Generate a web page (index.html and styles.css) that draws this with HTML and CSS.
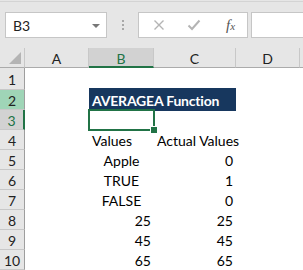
FILE: index.html
```html
<!DOCTYPE html>
<html lang="en">

<head>
  <meta charset="UTF-8" />
  <meta name="viewport" content="width=device-width, initial-scale=1" />
  <title>AVERAGEA Function</title>
  <link rel="stylesheet" href="styles.css">
</head>

<body>
  <div class="toolbar">
    <div class="name-box">
      <span>B3</span>
      <span class="caret"></span>
    </div>
    <div class="grip"><i></i><i></i><i></i></div>
    <div class="fx-buttons">
      <svg class="fx-icon" width="12" height="12" viewBox="0 0 12 12">
        <path d="M1.5 1.5 L10.5 10.5 M10.5 1.5 L1.5 10.5" stroke="#b4b4b4" stroke-width="1.4" fill="none" />
      </svg>
      <svg class="fx-icon" width="14" height="12" viewBox="0 0 14 12">
        <path d="M1.5 6.5 L5 10 L12.5 1.5" stroke="#b4b4b4" stroke-width="2" fill="none" />
      </svg>
      <span class="fx">f<sub>x</sub></span>
    </div>
    <div class="formula-input"></div>
  </div>

  <div class="sheet">
    <div class="corner"><span class="corner-tri"></span></div>
    <div class="col-head">A</div>
    <div class="col-head active">B</div>
    <div class="col-head">C</div>
    <div class="col-head">D</div>
    <div class="col-head last"></div>

    <div class="row-head">1</div>
    <div class="cell"></div><div class="cell"></div><div class="cell"></div><div class="cell"></div><div class="cell"></div>

    <div class="row-head marked">2</div>
    <div class="cell"></div>
    <div class="cell title">AVERAGEA Function</div>
    <div class="cell"></div><div class="cell"></div>

    <div class="row-head active">3</div>
    <div class="cell"></div>
    <div class="cell selected"></div>
    <div class="cell"></div><div class="cell"></div><div class="cell"></div>

    <div class="row-head">4</div>
    <div class="cell"></div>
    <div class="cell">Values</div>
    <div class="cell">Actual Values</div>
    <div class="cell"></div><div class="cell"></div>

    <div class="row-head">5</div>
    <div class="cell"></div>
    <div class="cell center">Apple</div>
    <div class="cell num">0</div>
    <div class="cell"></div><div class="cell"></div>

    <div class="row-head">6</div>
    <div class="cell"></div>
    <div class="cell center">TRUE</div>
    <div class="cell num">1</div>
    <div class="cell"></div><div class="cell"></div>

    <div class="row-head">7</div>
    <div class="cell"></div>
    <div class="cell center">FALSE</div>
    <div class="cell num">0</div>
    <div class="cell"></div><div class="cell"></div>

    <div class="row-head">8</div>
    <div class="cell"></div>
    <div class="cell num">25</div>
    <div class="cell num">25</div>
    <div class="cell"></div><div class="cell"></div>

    <div class="row-head">9</div>
    <div class="cell"></div>
    <div class="cell num">45</div>
    <div class="cell num">45</div>
    <div class="cell"></div><div class="cell"></div>

    <div class="row-head">10</div>
    <div class="cell"></div>
    <div class="cell num">65</div>
    <div class="cell num">65</div>
    <div class="cell"></div><div class="cell"></div>
  </div>
</body>

</html>
```

FILE: styles.css
```css
* {
  margin: 0;
  padding: 0;
  box-sizing: border-box;
}

body {
  background-color: #e6e6e6;
  font-family: 'Lato', 'Open Sans', sans-serif;
  font-size: 14px;
  color: #000;
  overflow: hidden;
}

.toolbar {
  height: 47px;
  border-top: 1px solid #d4d4d4;
  margin-top: 1px;
  padding-top: 10px;
  display: flex;
  align-items: flex-start;
}

.name-box {
  margin-left: 5px;
  width: 102px;
  height: 26px;
  background-color: #fff;
  border: 1px solid #c6c6c6;
  display: flex;
  align-items: center;
  justify-content: space-between;
  padding: 0 6px 0 7px;
  font-size: 14px;
  color: #222;
}

.caret {
  width: 0;
  height: 0;
  border-left: 4px solid transparent;
  border-right: 4px solid transparent;
  border-top: 4px solid #777;
  margin-top: 1px;
}

.grip {
  width: 31px;
  height: 26px;
  display: flex;
  flex-direction: column;
  align-items: center;
  justify-content: center;
  gap: 2px;
}

.grip i {
  display: block;
  width: 2px;
  height: 2px;
  background-color: #a8a8a8;
}

.fx-buttons {
  width: 110px;
  height: 26px;
  background-color: #fff;
  border: 1px solid #c6c6c6;
  display: flex;
  align-items: center;
  padding-left: 14px;
  gap: 22px;
}

.fx {
  font-family: 'Liberation Serif', serif;
  font-style: italic;
  font-size: 15px;
  color: #555;
  margin-left: 3px;
}

.fx sub {
  font-size: 11px;
  vertical-align: baseline;
}

.formula-input {
  flex: 1;
  margin-left: 3px;
  height: 26px;
  background-color: #fff;
  border: 1px solid #c6c6c6;
  border-right: none;
}

.sheet {
  display: grid;
  grid-template-columns: 25px 64px 65px 82px 64px 3px;
  grid-template-rows: 20px 22px repeat(9, 20px);
  background-color: #fff;
}

.corner {
  background-color: #e6e6e6;
  border-right: 1px solid #c8c8c8;
  border-bottom: 1px solid #ababab;
  position: relative;
}

.corner-tri {
  position: absolute;
  right: 3px;
  bottom: 3px;
  width: 0;
  height: 0;
  border-left: 12px solid transparent;
  border-bottom: 12px solid #b4b4b4;
}

.col-head {
  background-color: #e6e6e6;
  border-right: 1px solid #c8c8c8;
  border-bottom: 1px solid #ababab;
  display: flex;
  align-items: center;
  justify-content: center;
  font-size: 14px;
  color: #222;
  padding-top: 2px;
}

.col-head.active {
  background-color: #d2d2d2;
  border-bottom: 2px solid #217346;
  color: #217346;
}

.col-head.last {
  border-right: none;
}

.row-head {
  background-color: #e6e6e6;
  border-right: 1px solid #9e9e9e;
  border-bottom: 1px solid #c8c8c8;
  display: flex;
  align-items: center;
  justify-content: center;
  font-size: 14px;
  color: #222;
  padding-top: 1px;
}

.row-head.marked {
  background-color: #9fd5b7;
  color: #222;
}

.row-head.active {
  background-color: #d2d2d2;
  border-right: 2px solid #217346;
  color: #217346;
}

.cell {
  display: flex;
  align-items: center;
  padding: 1px 3px 0 3px;
  white-space: nowrap;
}

.cell.center {
  justify-content: center;
}

.cell.num {
  justify-content: flex-end;
}

.cell.title {
  grid-column: span 2;
  background-color: #17375e;
  color: #fff;
  font-weight: bold;
  letter-spacing: -0.2px;
  margin-top: -2px;
  margin-bottom: -1px;
}

.cell.selected {
  position: relative;
  outline: 2px solid #217346;
  outline-offset: -1px;
}

.cell.selected::after {
  content: '';
  position: absolute;
  right: -4px;
  bottom: -4px;
  width: 6px;
  height: 6px;
  background-color: #217346;
  border: 1px solid #fff;
}
```
